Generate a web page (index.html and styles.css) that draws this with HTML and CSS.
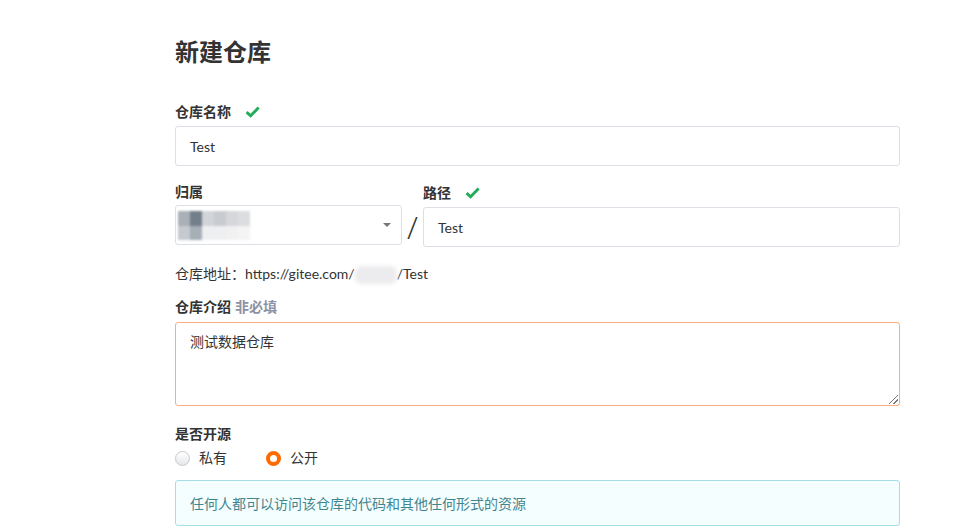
FILE: index.html
```html
<!DOCTYPE html>
<html lang="zh-CN">
<head>
<meta charset="utf-8">
<title>新建仓库</title>
<link rel="stylesheet" href="styles.css">
</head>
<body>
<div class="page">
  <h1 class="title">新建仓库</h1>

  <div class="field">
    <div class="label">仓库名称<span class="check"><svg width="15" height="12" viewBox="0 0 15 12"><path d="M1.6 6.2 L5.6 9.8 L13.6 1.6" fill="none" stroke="#1fae57" stroke-width="2.9"/></svg></span></div>
    <div class="input"><span>Test</span></div>
  </div>

  <div class="row">
    <div class="col-owner">
      <div class="label">归属</div>
      <div class="select">
        <div class="blur">
          <span style="background:#a9b0b8"></span><span style="background:#737f8b"></span><span style="background:#d3d4d8"></span><span style="background:#c8cbd0"></span><span style="background:#d6d7da"></span><span style="background:#dcdde0"></span>
          <span style="background:#c5cad0"></span><span style="background:#a6aeb6"></span><span style="background:#eeeff0"></span><span style="background:#eeeff1"></span><span style="background:#f1f1f2"></span><span style="background:#f4f4f5"></span>
        </div>
        <span class="caret"></span>
      </div>
    </div>
    <div class="slash">/</div>
    <div class="col-path">
      <div class="label">路径<span class="check"><svg width="15" height="12" viewBox="0 0 15 12"><path d="M1.6 6.2 L5.6 9.8 L13.6 1.6" fill="none" stroke="#1fae57" stroke-width="2.9"/></svg></span></div>
      <div class="input"><span>Test</span></div>
    </div>
  </div>

  <div class="addr">仓库地址：https://gitee.com/<span class="addr-blur"></span>/Test</div>

  <div class="field desc">
    <div class="label">仓库介绍<span class="optional">非必填</span></div>
    <div class="textarea"><span>测试数据仓库</span><span class="grip"></span></div>
  </div>

  <div class="field open">
    <div class="label">是否开源</div>
    <div class="radios">
      <label class="radio"><span class="dot"></span>私有</label>
      <label class="radio on"><span class="dot"></span>公开</label>
    </div>
  </div>

  <div class="info">任何人都可以访问该仓库的代码和其他任何形式的资源</div>
</div>
</body>
</html>
```

FILE: styles.css
```css
html, body {
  margin: 0;
  padding: 0;
  background: #fff;
}
body {
  font-family: Lato, "Noto Sans CJK SC", sans-serif;
  color: #333;
  font-size: 14px;
}
.page {
  width: 725px;
  margin-left: 175px;
  padding-top: 34px;
}
.title {
  font-size: 24px;
  font-weight: 700;
  line-height: 36px;
  margin: 0 0 32px;
  color: #333;
}
.label {
  font-weight: 700;
  font-size: 14px;
  line-height: 20px;
  color: #333;
  display: flex;
  align-items: center;
}
.check {
  display: inline-flex;
  margin-left: 14px;
}
.optional {
  color: #8c92a4;
  margin-left: 4px;
}
.field .label { margin-bottom: 4px; }
.input {
  height: 38px;
  border: 1px solid #dcdfe6;
  border-radius: 3px;
  display: flex;
  align-items: center;
  padding-left: 14px;
  font-size: 14px;
  color: #333;
}
.row {
  display: flex;
  align-items: flex-start;
  margin-top: 16px;
}
.col-owner { width: 227px; }
.col-owner .label { margin-bottom: 3px; }
.col-path { flex: 1; margin-top: 1px; }
.col-path .label { margin-bottom: 4px; }
.select {
  height: 38px;
  border: 1px solid #dcdfe6;
  border-radius: 3px;
  position: relative;
  display: flex;
  align-items: center;
}
.blur {
  display: grid;
  grid-template-columns: repeat(6, 12px);
  grid-template-rows: 15px 14px;
  margin-left: 2px;
  filter: blur(1px);
}
.blur span { display: block; }
.caret {
  position: absolute;
  right: 10px;
  top: 17px;
  width: 0;
  height: 0;
  border-left: 4px solid transparent;
  border-right: 4px solid transparent;
  border-top: 4px solid #777;
}
.slash {
  width: 21px;
  text-align: center;
  font-size: 32px;
  line-height: 30px;
  margin-top: 30px;
  color: #333;
  font-family: "Open Sans", sans-serif;
  font-weight: 300;
}
.addr {
  margin-top: 17px;
  line-height: 20px;
  font-size: 14px;
  color: #333;
}
.addr-blur {
  display: inline-block;
  width: 42px;
  height: 18px;
  vertical-align: -5px;
  background: #ececee;
  filter: blur(2px);
  border-radius: 6px;
}
.desc { margin-top: 13px; }
.desc .label { margin-bottom: 5px; }
.textarea {
  border: 1px solid #f8b17e;
  border-radius: 3px;
  padding: 9px 14px;
  box-sizing: border-box;
  height: 84px;
  font-size: 14px;
  position: relative;
  line-height: 20px;
}
.grip {
  position: absolute;
  right: 1px;
  bottom: 1px;
  width: 9px;
  height: 9px;
  background: linear-gradient(135deg, transparent 45%, #777 45%, #777 53%, transparent 53%, transparent 70%, #777 70%, #777 78%, transparent 78%);
}
.open { margin-top: 18px; }
.radios {
  display: flex;
  margin-top: 3px;
}
.radio {
  display: flex;
  align-items: center;
  font-size: 14px;
  color: #333;
  line-height: 20px;
  width: 91px;
}
.dot {
  width: 15px;
  height: 15px;
  box-sizing: border-box;
  border-radius: 50%;
  border: 1px solid #c8c9cc;
  background: linear-gradient(#fff, #e6e7ea);
  margin-right: 9px;
}
.radio.on .dot {
  border: 4.5px solid #ff6a00;
  background: #fff;
}
.info {
  margin-top: 12px;
  height: 44px;
  border: 1px solid #a6dde6;
  border-radius: 3px;
  background: #f5fefe;
  color: #3f8690;
  font-size: 14px;
  display: flex;
  align-items: center;
  padding-left: 14px;
}
```
